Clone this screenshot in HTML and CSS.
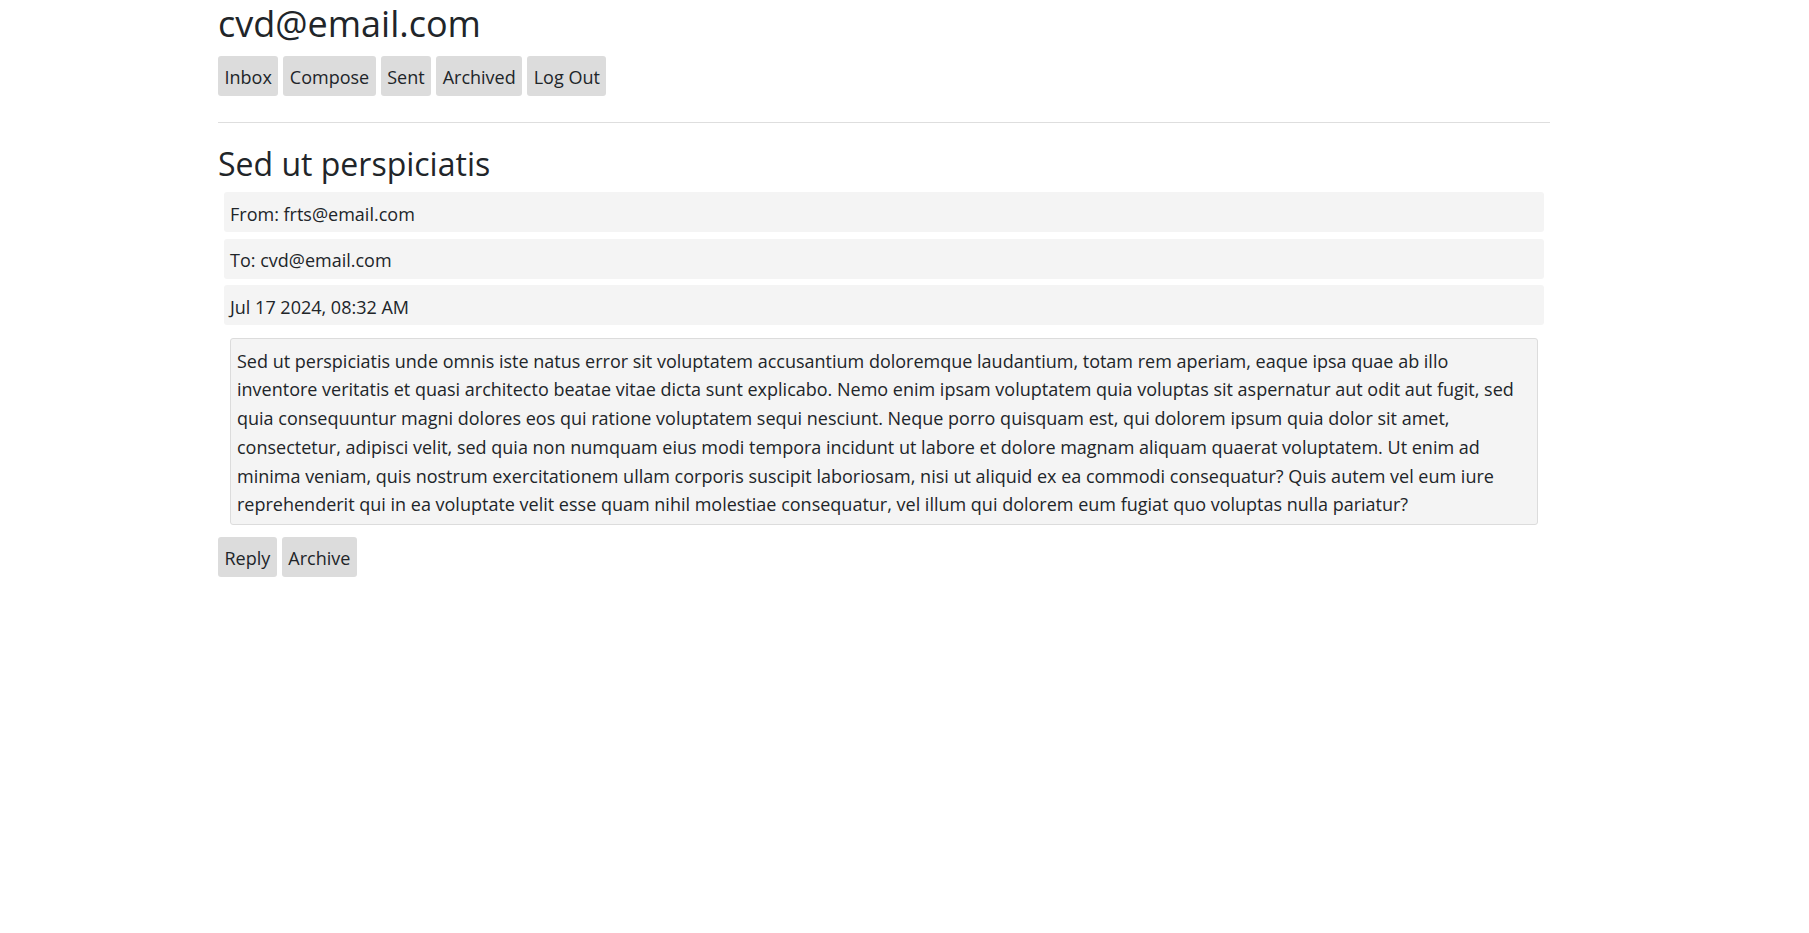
FILE: index.html
```html
<!DOCTYPE html>
<html lang="en">
<head>
<meta charset="utf-8">
<title>Mail</title>
<link rel="stylesheet" href="styles.css">
</head>
<body>
<div class="page">
  <h1 class="user">cvd@email.com</h1>
  <nav class="nav">
    <button class="btn">Inbox</button>
    <button class="btn">Compose</button>
    <button class="btn">Sent</button>
    <button class="btn">Archived</button>
    <button class="btn">Log Out</button>
  </nav>
  <hr class="rule">
  <h2 class="subject">Sed ut perspiciatis</h2>
  <div class="meta">
    <div class="meta-row">From: frts@email.com</div>
    <div class="meta-row">To: cvd@email.com</div>
    <div class="meta-row">Jul 17 2024, 08:32 AM</div>
  </div>
  <div class="body-text">Sed ut perspiciatis unde omnis iste natus error sit voluptatem accusantium doloremque laudantium, totam rem aperiam, eaque ipsa quae ab illo inventore veritatis et quasi architecto beatae vitae dicta sunt explicabo. Nemo enim ipsam voluptatem quia voluptas sit aspernatur aut odit aut fugit, sed quia consequuntur magni dolores eos qui ratione voluptatem sequi nesciunt. Neque porro quisquam est, qui dolorem ipsum quia dolor sit amet, consectetur, adipisci velit, sed quia non numquam eius modi tempora incidunt ut labore et dolore magnam aliquam quaerat voluptatem. Ut enim ad minima veniam, quis nostrum exercitationem ullam corporis suscipit laboriosam, nisi ut aliquid ex ea commodi consequatur? Quis autem vel eum iure reprehenderit qui in ea voluptate velit esse quam nihil molestiae consequatur, vel illum qui dolorem eum fugiat quo voluptas nulla pariatur?</div>
  <div class="actions">
    <button class="btn">Reply</button>
    <button class="btn">Archive</button>
  </div>
</div>
</body>
</html>
```
FILE: styles.css
```css
html, body {
  margin: 0;
  padding: 0;
  background: #ffffff;
}
body {
  font-family: "Open Sans", "Noto Sans", sans-serif;
  font-size: 18px;
  color: #212529;
}
.page {
  width: 1332px;
  padding-left: 218px;
}
.user {
  margin: 1px 0 0;
  font-size: 36px;
  font-weight: 400;
  line-height: 45px;
}
.nav {
  display: flex;
  gap: 5px;
  margin-top: 10px;
}
.btn {
  font-family: inherit;
  font-size: 18px;
  color: #212529;
  background: #dcdcdc;
  border: none;
  border-radius: 3px;
  height: 40px;
  line-height: 40px;
  padding: 1px 6.5px 0;
  margin: 0;
}
.rule {
  margin: 26px 0 0;
  border: none;
  border-top: 1px solid #dedede;
  height: 0;
}
.subject {
  margin: 21px 0 0;
  font-size: 32px;
  font-weight: 400;
  line-height: 40px;
}
.meta {
  display: flex;
  flex-direction: column;
  gap: 6.5px;
  margin: 8px 6px 0;
}
.meta-row {
  background: #f4f4f4;
  border-radius: 3px;
  height: 40px;
  line-height: 40px;
  padding: 1.5px 6px 0;
  box-sizing: border-box;
}
.body-text {
  margin: 13px 12px 0;
  background: #f4f4f4;
  border: 1px solid #dcdcdc;
  border-radius: 3px;
  padding: 7.5px 8px 4.5px 6px;
  line-height: 28.8px;
}
.actions {
  display: flex;
  gap: 5px;
  margin-top: 12.5px;
}
```
